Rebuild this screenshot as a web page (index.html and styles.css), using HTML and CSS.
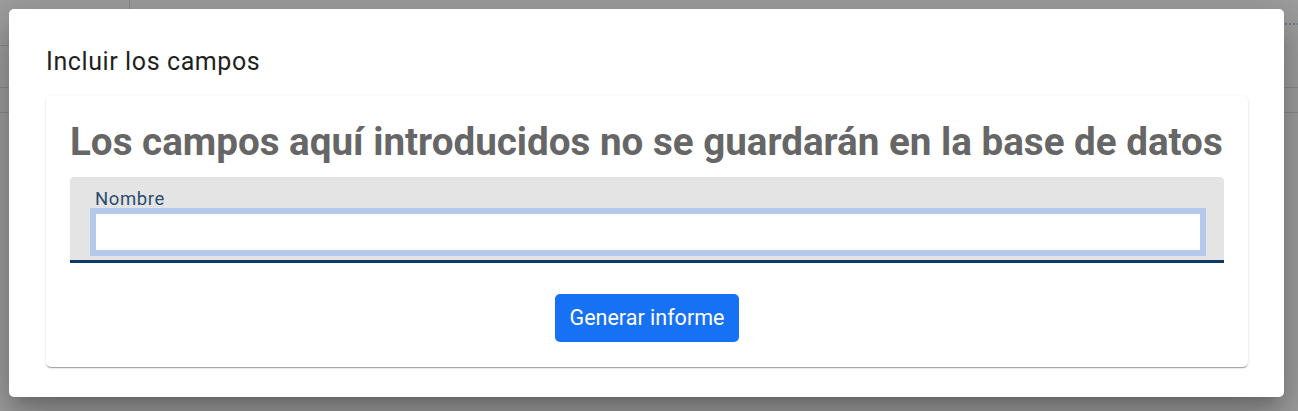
FILE: index.html
```html
<!DOCTYPE html>
<html lang="es">
<head>
<meta charset="utf-8">
<title>Incluir los campos</title>
<link rel="stylesheet" href="styles.css">
</head>
<body>
<div class="backdrop">
  <div class="bg-vline"></div>
  <div class="bg-hline l1"></div>
  <div class="bg-hline l2"></div>
  <div class="bg-hline l3"></div>
  <div class="bg-hline r1"></div>
  <div class="bg-hline r2"></div>
  <div class="bg-dots"></div>
  <div class="dialog">
    <h2 class="dialog-title">Incluir los campos</h2>
    <div class="card">
      <h1 class="card-heading">Los campos aquí introducidos no se guardarán en la base de datos</h1>
      <div class="field">
        <label class="field-label" for="nombre">Nombre</label>
        <input class="field-input" id="nombre" type="text">
      </div>
      <div class="actions">
        <button class="btn" type="button">Generar informe</button>
      </div>
    </div>
  </div>
</div>
</body>
</html>
```
FILE: styles.css
```css
html, body {
  margin: 0;
  padding: 0;
  height: 100%;
}
body {
  font-family: Roboto, "Liberation Sans", sans-serif;
  background: #9d9d9d;
  overflow: hidden;
}
.backdrop {
  position: relative;
  width: 1298px;
  height: 411px;
  background: #9e9e9e;
  padding: 9px;
  box-sizing: border-box;
}
.bg-vline {
  position: absolute;
  left: 129px;
  top: 0;
  width: 1px;
  height: 9px;
  background: #8a8a8a;
}
.bg-hline {
  position: absolute;
  height: 1px;
  background: #8c8c8c;
}
.bg-hline.l1 { left: 0; width: 9px; top: 45px; }
.bg-hline.l2 { left: 0; width: 9px; top: 87px; }
.bg-hline.l3 { left: 0; width: 9px; top: 112px; }
.bg-hline.r1 { right: 0; width: 14px; top: 87px; }
.bg-hline.r2 { right: 0; width: 14px; top: 112px; }
.bg-dots {
  position: absolute;
  right: 0;
  top: 23px;
  width: 13px;
  height: 2px;
  background: repeating-linear-gradient(90deg, #6c7a8a 0 2px, transparent 2px 4px);
}
.dialog {
  position: relative;
  background: #ffffff;
  border-radius: 5px;
  width: 1275px;
  height: 388px;
  box-sizing: border-box;
  padding: 37px 36px 0 37px;
  box-shadow: 0 11px 15px -7px rgba(0,0,0,.2), 0 24px 38px 3px rgba(0,0,0,.14), 0 9px 46px 8px rgba(0,0,0,.12);
}
.dialog-title {
  margin: 0;
  font-size: 25px;
  font-weight: 400;
  line-height: 32px;
  color: #1f1f1f;
  letter-spacing: 0.6px;
}
.card {
  margin-top: 18px;
  background: #fff;
  border-radius: 5px;
  box-shadow: 0 2px 1px -1px rgba(0,0,0,.2), 0 1px 1px 0 rgba(0,0,0,.14), 0 1px 3px 0 rgba(0,0,0,.12);
  padding: 18px 24px 25px 24px;
}
.card-heading {
  margin: 0;
  font-size: 38.6px;
  font-weight: 700;
  line-height: 56px;
  color: #666666;
  white-space: nowrap;
}
.field {
  margin-top: 7px;
  background: #e4e4e4;
  border-radius: 4px 4px 0 0;
  border-bottom: 3px solid #0f3a63;
  height: 83px;
  padding: 0 18px 0 20px;
  display: flex;
  flex-direction: column;
}
.field-label {
  margin-top: 13px;
  margin-left: 5px;
  font-size: 18.5px;
  line-height: 18px;
  color: #2a4c70;
  letter-spacing: 0.6px;
}
.field-input {
  display: block;
  height: 48px;
  box-sizing: border-box;
  border: 6px solid #b4c9ec;
  background: #fff;
  outline: none;
  margin: 0;
  padding: 0 6px;
  font: inherit;
}
.actions {
  display: flex;
  justify-content: center;
  margin-top: 31px;
}
.btn {
  background: #1671f5;
  color: #fff;
  border: none;
  border-radius: 5px;
  height: 48px;
  padding: 0 15px 2px;
  font-family: Roboto, "Liberation Sans", sans-serif;
  font-size: 21.5px;
  font-weight: 400;
}
```
